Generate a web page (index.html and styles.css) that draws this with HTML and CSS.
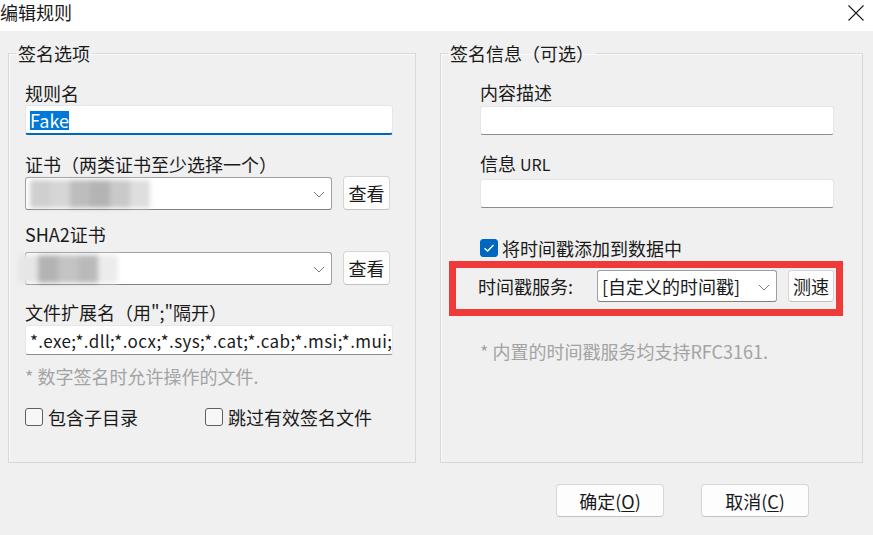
FILE: index.html
```html
<!DOCTYPE html>
<html lang="zh-CN">
<head>
    <meta charset="UTF-8">
    <meta name="viewport" content="width=device-width, initial-scale=1.0">
    <title>编辑规则</title>
    <link rel="stylesheet" href="styles.css">
</head>
<body>
    <div class="window">
        <div class="titlebar">
            <span class="title">编辑规则</span>
            <svg class="close" width="16" height="16" viewBox="0 0 16 16">
                <path d="M0.5 0.5 L15.5 15.5 M15.5 0.5 L0.5 15.5" stroke="#1a1a1a" stroke-width="1.1" fill="none"/>
            </svg>
        </div>

        <div class="content">
            <div class="groups">
                <fieldset class="group">
                    <legend>签名选项</legend>
                    <div class="group-body left-body">
                        <div class="label rule-label">规则名</div>
                        <div class="textbox focused"><span class="selected">Fake</span></div>

                        <div class="label cert-label">证书（两类证书至少选择一个）</div>
                        <div class="combo-row">
                            <div class="combo">
                                <div class="smudge smudge-a">
                                    <i style="background:#cfcfcf"></i><i style="background:#d6d6d6"></i><i style="background:#bdbdbd"></i><i style="background:#b4b4b4"></i><i style="background:#c9c9c9"></i><i style="background:#dedede"></i>
                                </div>
                                <svg class="chevron" width="12" height="7" viewBox="0 0 12 7"><path d="M1 1 L6 6 L11 1" stroke="#7a7a7a" stroke-width="1" fill="none"/></svg>
                            </div>
                            <button class="btn small">查看</button>
                        </div>

                        <div class="label sha2-label">SHA2证书</div>
                        <div class="combo-row">
                            <div class="combo">
                                <div class="smudge smudge-b">
                                    <i style="background:#e6e6e6"></i><i style="background:#b3b3b3"></i><i style="background:#c4c4c4"></i><i style="background:#bababa"></i><i style="background:#ececec"></i>
                                </div>
                                <svg class="chevron" width="12" height="7" viewBox="0 0 12 7"><path d="M1 1 L6 6 L11 1" stroke="#7a7a7a" stroke-width="1" fill="none"/></svg>
                            </div>
                            <button class="btn small">查看</button>
                        </div>

                        <div class="label ext-label">文件扩展名（用";"隔开）</div>
                        <div class="textbox"><span class="value">*.exe;*.dll;*.ocx;*.sys;*.cat;*.cab;*.msi;*.mui;*.appx;*.msix</span></div>
                        <div class="hint ext-hint">* 数字签名时允许操作的文件.</div>

                        <div class="check-row">
                            <label class="check wide"><span class="box"></span>包含子目录</label>
                            <label class="check"><span class="box"></span>跳过有效签名文件</label>
                        </div>
                    </div>
                </fieldset>

                <fieldset class="group">
                    <legend>签名信息（可选）</legend>
                    <div class="group-body right-body">
                        <div class="label desc-label">内容描述</div>
                        <div class="textbox short"></div>

                        <div class="label url-label">信息 <span class="latin">URL</span></div>
                        <div class="textbox short"></div>

                        <label class="check stamp-check"><span class="box checked"><svg width="12" height="10" viewBox="0 0 12 10"><path d="M1.5 5.2 L4.6 8 L10.5 2" stroke="#fff" stroke-width="1.4" fill="none"/></svg></span>将时间戳添加到数据中</label>

                        <div class="stamp-row">
                            <span class="stamp-label">时间戳服务:</span>
                            <div class="combo stamp-combo">
                                <span class="combo-text">[自定义的时间戳]</span>
                                <svg class="chevron" width="12" height="7" viewBox="0 0 12 7"><path d="M1 1 L6 6 L11 1" stroke="#7a7a7a" stroke-width="1" fill="none"/></svg>
                            </div>
                            <button class="btn small">测速</button>
                        </div>

                        <div class="hint stamp-hint">* 内置的时间戳服务均支持RFC3161.</div>
                    </div>
                </fieldset>
            </div>

            <div class="actions">
                <button class="btn wide-btn">确定(<u>O</u>)</button>
                <button class="btn wide-btn">取消(<u>C</u>)</button>
            </div>
        </div>
    </div>
</body>
</html>
```

FILE: styles.css
```css
body {
    margin: 0;
    font-family: "Noto Sans CJK SC", "Noto Sans", sans-serif;
    font-size: 18px;
    color: #1a1a1a;
    background: #f0f0f0;
}
.window {
    width: 873px;
    height: 535px;
    overflow: hidden;
    background: #f0f0f0;
}

/* title bar */
.titlebar {
    height: 31px;
    background: #ffffff;
    display: flex;
    justify-content: space-between;
    align-items: flex-start;
}
.title {
    line-height: 24px;
}
.close {
    margin: 5px 9px 0 0;
}

/* group boxes */
.groups {
    display: grid;
    grid-template-columns: 408px 423px;
    column-gap: 24px;
    padding: 10px 0 0 8px;
    height: 422px;
}
.group {
    margin: 0;
    padding: 0;
    min-width: 0;
    border: 1px solid #d9d9d9;
    box-shadow: inset 1px 1px 0 #fafafa;
}
.group legend {
    margin-left: 7px;
    padding: 0 2px;
    line-height: 24px;
}
.left-body {
    padding: 0 22px 0 16px;
}
.right-body {
    padding: 0 28px 0 39px;
}
.label {
    line-height: 24px;
    white-space: nowrap;
}
.rule-label {
    margin-top: 16px;
}
.cert-label {
    margin-top: 17px;
}
.sha2-label {
    margin: 12px 0 5px;
}
.ext-label {
    margin: 15px 0 1px;
}
.desc-label {
    margin: 15px 0 2px;
}
.url-label {
    margin: 16px 0 3px;
}
.latin {
    font-size: 16px;
}

/* text boxes */
.textbox {
    height: 30px;
    box-sizing: border-box;
    background: #ffffff;
    border: 1px solid #e6e6e6;
    border-bottom-color: #8c8c8c;
    border-radius: 3px;
    padding: 0 4px;
    display: flex;
    align-items: center;
    overflow: hidden;
    white-space: nowrap;
}
.textbox.short {
    height: 29px;
}
.textbox.focused {
    border-bottom: 2px solid #0067c0;
}
.selected {
    background: #0078d7;
    color: #ffffff;
    line-height: 19px;
    margin-top: 1px;
}
.value {
    font-size: 17px;
    letter-spacing: 0.4px;
}

/* combo boxes */
.combo-row {
    display: flex;
    align-items: center;
    gap: 11px;
}
.combo {
    position: relative;
    flex: 0 0 307px;
    height: 33px;
    box-sizing: border-box;
    background: #ffffff;
    border: 1px solid #a0a0a0;
    border-bottom-color: #808080;
    border-radius: 3px;
    display: flex;
    align-items: center;
}
.chevron {
    position: absolute;
    right: 6px;
    top: 13px;
}
.combo-text {
    padding-left: 4px;
    white-space: nowrap;
}

/* blurred-out certificate names */
.smudge {
    position: absolute;
    top: 2px;
    display: flex;
    filter: blur(2.5px);
}
.smudge i {
    display: block;
    width: 20px;
    height: 28px;
}
.smudge-a {
    left: 4px;
}
.smudge-b {
    left: -8px;
}

/* buttons */
.btn {
    font: inherit;
    color: #1a1a1a;
    background: #fdfdfd;
    border: 1px solid #d6d6d6;
    border-bottom-color: #c2c2c2;
    border-radius: 4px;
    padding: 0;
    line-height: 24px;
}
.btn.small {
    width: 47px;
    height: 34px;
}
.btn u {
    text-underline-offset: 2px;
}

/* hints */
.hint {
    color: #a3a3a3;
    line-height: 24px;
    white-space: nowrap;
}
.ext-hint {
    margin-top: 9px;
}
.stamp-hint {
    margin-top: 23px;
}

/* check boxes */
.check-row {
    display: flex;
    margin-top: 17px;
}
.check {
    display: flex;
    align-items: center;
    line-height: 24px;
    white-space: nowrap;
}
.check.wide {
    width: 180px;
}
.box {
    width: 18px;
    height: 18px;
    box-sizing: border-box;
    border: 1px solid #5f5f5f;
    border-radius: 3px;
    background: #f7f7f7;
    margin-right: 5px;
    display: flex;
    align-items: center;
    justify-content: center;
}
.box.checked {
    background: #0067c0;
    border-color: #0067c0;
}
.stamp-check {
    margin-top: 28px;
}
.stamp-check .box {
    margin-right: 4px;
}

/* highlighted timestamp row */
.stamp-row {
    display: flex;
    align-items: center;
    margin: 1px -9px 0 -31px;
    padding: 2px 2px 7px 22px;
    border: 7px solid #ef3a3a;
    background: #f0f0f0;
}
.stamp-label {
    width: 119px;
    line-height: 24px;
    white-space: nowrap;
}
.stamp-combo {
    flex: 0 0 180px;
    height: 32px;
    margin-right: 11px;
}
.stamp-row .btn.small {
    width: 46px;
    height: 32px;
}

/* dialog buttons */
.actions {
    display: flex;
    justify-content: flex-end;
    gap: 37px;
    padding-right: 64px;
    margin-top: 21px;
}
.wide-btn {
    width: 108px;
    height: 33px;
}
```
